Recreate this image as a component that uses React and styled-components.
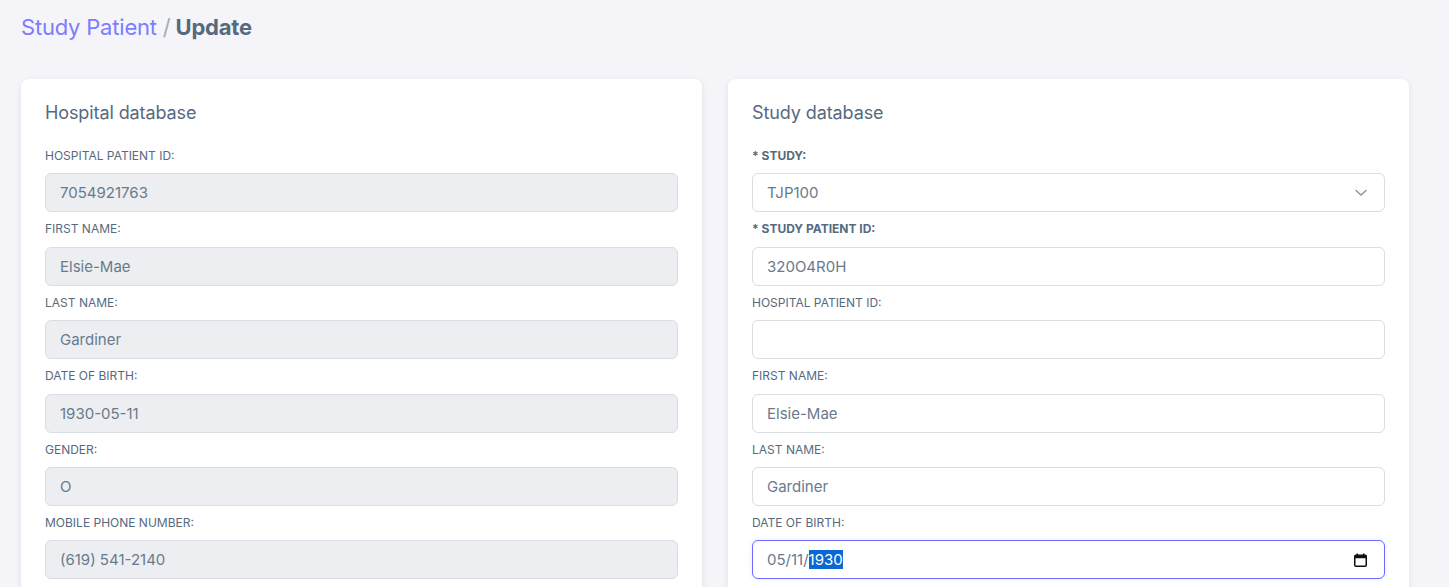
import React from "react";
import styled, { createGlobalStyle } from "styled-components";

const Global = createGlobalStyle`
  html, body { margin: 0; padding: 0; overflow: hidden; }
  body {
    background: #f5f5f9;
    font-family: "Inter", "Noto Sans", "Liberation Sans", sans-serif;
    color: #697a8d;
  }
  * { box-sizing: border-box; }
`;

const Page = styled.div`
  padding: 14px 40px 0 21px;
`;

const Breadcrumb = styled.h4`
  margin: 0;
  font-size: 22px;
  line-height: 26px;
  font-weight: 700;
  letter-spacing: -0.2px;
  color: #566a7f;
`;

const Crumb = styled.span`
  color: #7a7dff;
  font-weight: 400;
`;

const Sep = styled.span`
  color: #a1acb8;
  font-weight: 400;
`;

const Columns = styled.div`
  display: grid;
  grid-template-columns: 681px 681px;
  gap: 26px;
  margin-top: 39px;
`;

const Card = styled.section`
  background: #fff;
  border-radius: 8px;
  box-shadow: 0 2px 6px 0 rgba(67, 89, 113, 0.12);
  padding: 24px 24px 8px;
`;

const CardTitle = styled.h5`
  margin: 0 0 24px;
  font-size: 18px;
  line-height: 20px;
  font-weight: 400;
  letter-spacing: -0.1px;
  color: #566a7f;
`;

const Field = styled.div`
  margin-bottom: 8px;
`;

const Label = styled.label`
  display: block;
  font-size: 12px;
  line-height: 18.4px;
  margin-bottom: 8px;
  text-transform: uppercase;
  color: #566a7f;
  font-weight: ${(p) => (p.$required ? 700 : 400)};
`;

const Input = styled.input`
  display: block;
  width: 100%;
  height: 39px;
  padding: 0 14px;
  font-family: inherit;
  font-size: 15px;
  color: #697a8d;
  background: ${(p) => (p.disabled ? "#eceef1" : "#fff")};
  border: 1px solid #d9dee3;
  border-radius: 6px;
  outline: none;
  &:disabled { opacity: 1; -webkit-text-fill-color: #697a8d; }
`;

const SelectBox = styled.div`
  display: flex;
  align-items: center;
  justify-content: space-between;
  height: 39px;
  padding: 0 17px 0 14px;
  font-size: 15px;
  color: #697a8d;
  background: #fff;
  border: 1px solid #d9dee3;
  border-radius: 6px;
`;

const DateBox = styled.div`
  display: flex;
  align-items: center;
  justify-content: space-between;
  height: 39px;
  padding: 0 17px 0 14px;
  font-size: 15px;
  color: #697a8d;
  background: #fff;
  border: 1px solid #696cff;
  border-radius: 6px;
  box-shadow: 0 0 4px 1px rgba(105, 108, 255, 0.1);
`;

const Selected = styled.span`
  background: #0a68d4;
  color: #fff;
`;

const Chevron = () => (
  <svg width="12" height="8" viewBox="0 0 12 8" fill="none">
    <path d="M1 1.5 L6 6 L11 1.5" stroke="#8592a3" strokeWidth="1.4" strokeLinecap="round" strokeLinejoin="round" />
  </svg>
);

const CalendarIcon = () => (
  <svg width="13" height="14" viewBox="0 0 13 14" fill="none">
    <rect x="0.75" y="2.25" width="11.5" height="11" rx="1" stroke="#111" strokeWidth="1.5" />
    <rect x="0.75" y="2.25" width="11.5" height="3" fill="#111" />
    <rect x="2.5" y="0.5" width="1.6" height="2.5" fill="#111" />
    <rect x="8.9" y="0.5" width="1.6" height="2.5" fill="#111" />
  </svg>
);

const hospital = [
  ["Hospital Patient ID:", "7054921763"],
  ["First name:", "Elsie-Mae"],
  ["Last name:", "Gardiner"],
  ["Date of birth:", "1930-05-11"],
  ["Gender:", "O"],
  ["Mobile phone number:", "(619) 541-2140"],
];

export default function App() {
  return (
    <>
      <Global />
      <Page>
        <Breadcrumb>
          <Crumb>Study Patient </Crumb>
          <Sep>/</Sep> Update
        </Breadcrumb>
        <Columns>
          <Card>
            <CardTitle>Hospital database</CardTitle>
            {hospital.map(([l, v]) => (
              <Field key={l}>
                <Label>{l}</Label>
                <Input disabled value={v} readOnly />
              </Field>
            ))}
          </Card>
          <Card>
            <CardTitle>Study database</CardTitle>
            <Field>
              <Label $required>* Study:</Label>
              <SelectBox>
                <span>TJP100</span>
                <Chevron />
              </SelectBox>
            </Field>
            <Field>
              <Label $required>* Study Patient ID:</Label>
              <Input value="320O4R0H" readOnly />
            </Field>
            <Field>
              <Label>Hospital Patient ID:</Label>
              <Input value="" readOnly />
            </Field>
            <Field>
              <Label>First name:</Label>
              <Input value="Elsie-Mae" readOnly />
            </Field>
            <Field>
              <Label>Last name:</Label>
              <Input value="Gardiner" readOnly />
            </Field>
            <Field>
              <Label>Date of birth:</Label>
              <DateBox>
                <span>
                  05/11/<Selected>1930</Selected>
                </span>
                <CalendarIcon />
              </DateBox>
            </Field>
          </Card>
        </Columns>
      </Page>
    </>
  );
}
